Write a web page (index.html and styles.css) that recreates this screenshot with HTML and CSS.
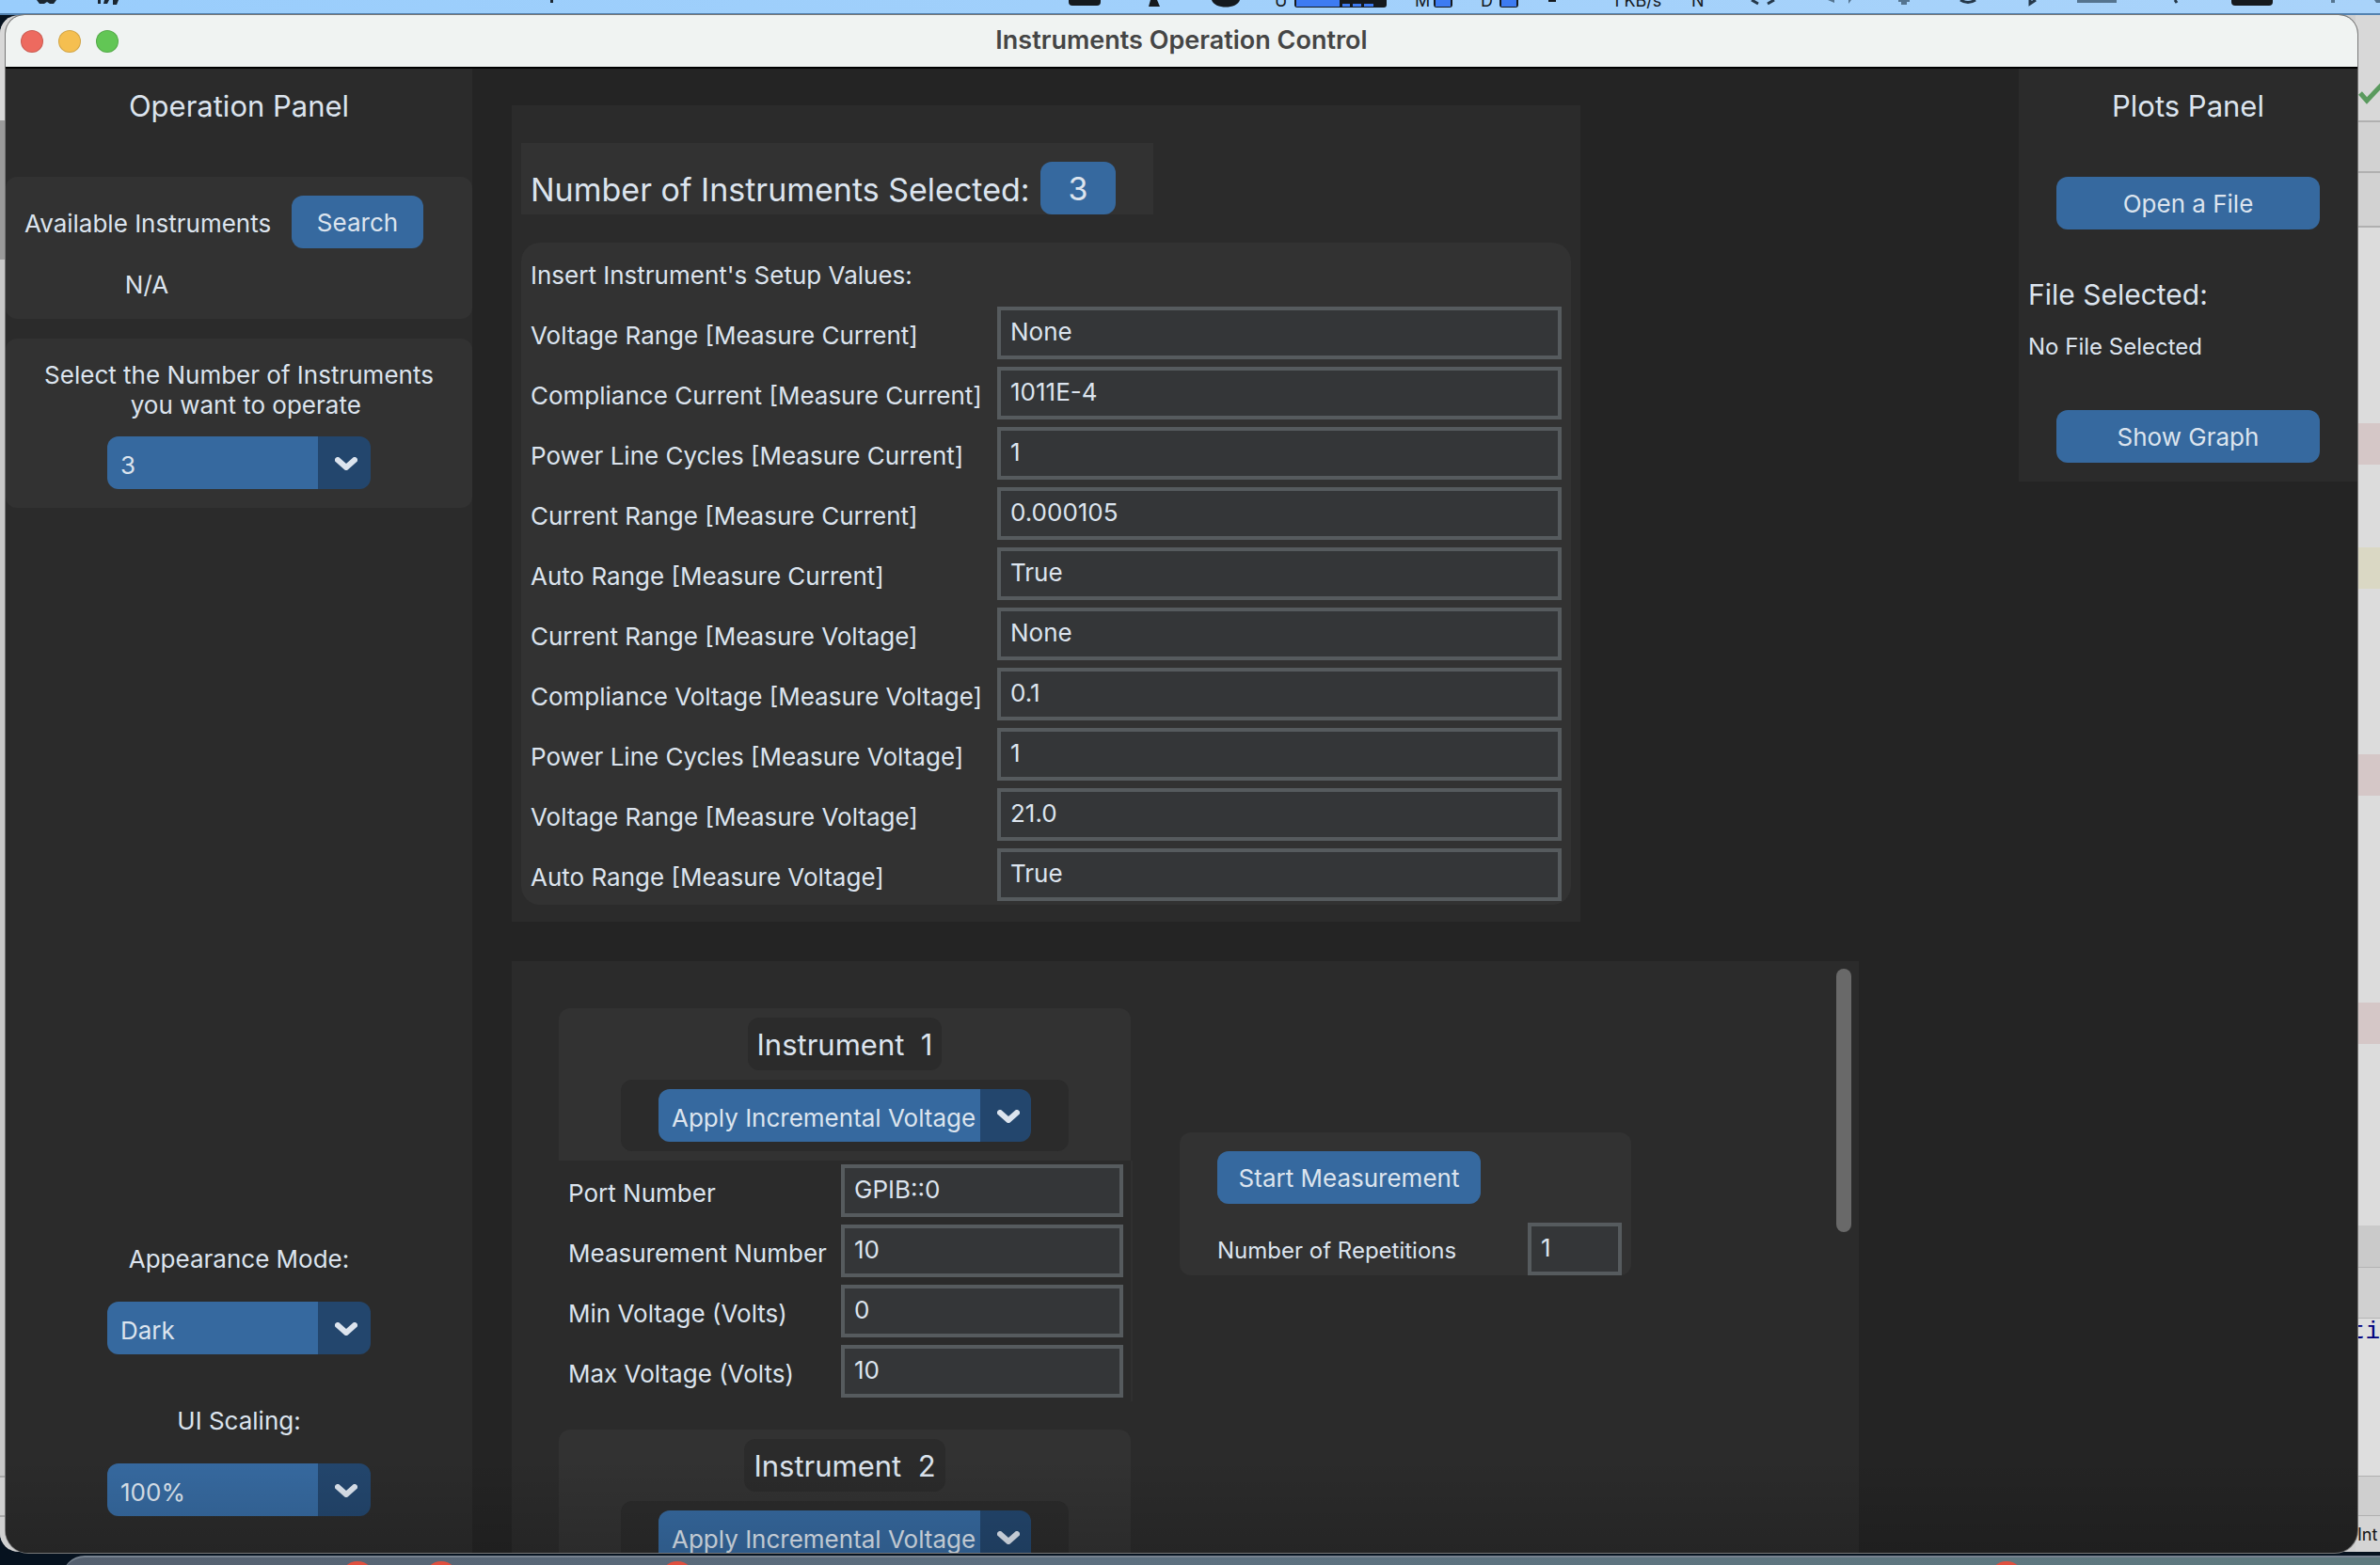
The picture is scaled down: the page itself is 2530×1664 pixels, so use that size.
FILE: index.html
```html
<!DOCTYPE html>
<html lang="en">
<head>
<meta charset="utf-8">
<title>Instruments Operation Control</title>
<link rel="stylesheet" href="styles.css">
</head>
<body>
<svg class="defs" aria-hidden="true"><symbol id="chevron" viewBox="0 0 24 14"><path d="M3 3 L12 11 L21 3" fill="none" stroke="currentColor" stroke-width="6" stroke-linecap="round" stroke-linejoin="round"/></symbol></svg>
<div class="desktop">
  <div class="menubar">
    <svg class="menu-left" width="640" height="14" viewBox="0 0 640 14" aria-hidden="true"><path d="M39 0H60L57 4H53L50 2L47 4H42ZM104 0H107V4H104ZM111 0L116 0L114 4H110ZM120 0H126L124 5H120ZM585 0H588V3H585Z" fill="#1b2630"/></svg>
    <svg class="menu-right" width="1410" height="16" viewBox="1120 0 1410 16" aria-hidden="true">
      <g fill="#15191d"><rect x="1136" y="-8" width="34" height="14" rx="4"/><path d="M1223 0H1230L1233 7H1221Z"/><path d="M1288 0H1318C1315 10 1291 10 1288 0Z"/><rect x="1376" y="-8" width="98" height="16" rx="3"/><rect x="1524" y="-8" width="20" height="16" rx="3"/><rect x="1594" y="-8" width="20" height="16" rx="3"/><rect x="1646" y="0" width="8" height="2"/><rect x="2372" y="-8" width="44" height="14" rx="4"/></g>
      <path d="M1378-2H1424V7H1378ZM1427 4H1435V7H1427ZM1438 4H1447V7H1438ZM1450 4H1460V7H1450ZM1526-2H1542V7H1526ZM1596-2H1612V7H1596Z" fill="#3d7bf2"/>
      <g fill="none" stroke="#25384a" stroke-width="3"><path d="M1862 0L1869 4M1886 0L1879 4M2084 0Q2092 5 2100 0M2158 0V4L2164 0M2312 0L2314 3"/></g>
      <g fill="#55748f"><path d="M1943 0H1950V3ZM1965 0H1968L1965 4ZM2018 0H2030V2H2027V5H2021V2H2018ZM2208 0H2250V3H2208ZM2478 0H2482V3H2478ZM2524 0H2530V3H2526Z"/></g>
      <g class="menu-glyphs"><text x="1355" y="7">U</text><text x="1504" y="7">M</text><text x="1574" y="7">D</text><text x="1714" y="7">1 KB/s</text><text x="1798" y="7">N</text></g>
    </svg>
  </div>

  <div class="editor" aria-hidden="true">
    <div class="gutter"></div>
    <div class="strip">
      <svg class="tick" width="26" height="24" viewBox="0 0 26 24"><path d="M3 11L10 19L26 2" fill="none" stroke="#5a9a5e" stroke-width="5"/></svg>
      <span class="code">ti</span>
      <span class="status">Int</span>
    </div>
  </div>

  <main class="window">
    <header class="titlebar">
      <div class="lights"><button class="light red" aria-label="Close"></button><button class="light amber" aria-label="Minimise"></button><button class="light green" aria-label="Zoom"></button></div>
      <h1>Instruments Operation Control</h1>
    </header>
    <div class="content">
      <aside class="sidebar">
        <h2>Operation Panel</h2>
        <section class="box search-box">
          <span class="caption">Available Instruments</span><button class="btn">Search</button>
          <span class="result">N/A</span>
        </section>
        <section class="box count-box">
          <label for="count">Select the Number of Instruments<br>&nbsp;&nbsp;you want to operate</label>
          <div class="option"><select id="count"><option>3</option></select><svg class="chev"><use href="#chevron"/></svg></div>
        </section>
        <section class="prefs">
          <label for="mode">Appearance Mode:</label>
          <div class="option"><select id="mode"><option>Dark</option></select><svg class="chev"><use href="#chevron"/></svg></div>
          <label for="scale">UI Scaling:</label>
          <div class="option"><select id="scale"><option>100%</option></select><svg class="chev"><use href="#chevron"/></svg></div>
        </section>
      </aside>

      <div class="work">
        <section class="setup">
          <div class="selected"><span>Number of Instruments Selected:</span><button class="btn">3</button></div>
          <form class="values">
            <p>Insert Instrument's Setup Values:</p>
            <label for="v1">Voltage Range [Measure Current]</label><input id="v1" value="None">
            <label for="v2">Compliance Current [Measure Current]</label><input id="v2" value="1011E-4">
            <label for="v3">Power Line Cycles [Measure Current]</label><input id="v3" value="1">
            <label for="v4">Current Range [Measure Current]</label><input id="v4" value="0.000105">
            <label for="v5">Auto Range [Measure Current]</label><input id="v5" value="True">
            <label for="v6">Current Range [Measure Voltage]</label><input id="v6" value="None">
            <label for="v7">Compliance Voltage [Measure Voltage]</label><input id="v7" value="0.1">
            <label for="v8">Power Line Cycles [Measure Voltage]</label><input id="v8" value="1">
            <label for="v9">Voltage Range [Measure Voltage]</label><input id="v9" value="21.0">
            <label for="v10">Auto Range [Measure Voltage]</label><input id="v10" value="True">
          </form>
        </section>

        <section class="runs">
          <div class="instruments">
            <article>
              <div class="head">
                <h3>Instrument&nbsp; 1</h3>
                <div class="action"><div class="option wide"><select aria-label="Instrument 1 action"><option>Apply Incremental Voltage</option></select><svg class="chev"><use href="#chevron"/></svg></div></div>
              </div>
              <form class="params">
                <label for="p1">Port Number</label><input id="p1" value="GPIB::0">
                <label for="p2">Measurement Number</label><input id="p2" value="10">
                <label for="p3">Min Voltage (Volts)</label><input id="p3" value="0">
                <label for="p4">Max Voltage (Volts)</label><input id="p4" value="10">
              </form>
            </article>
            <article>
              <div class="head">
                <h3>Instrument&nbsp; 2</h3>
                <div class="action"><div class="option wide"><select aria-label="Instrument 2 action"><option>Apply Incremental Voltage</option></select><svg class="chev"><use href="#chevron"/></svg></div></div>
              </div>
            </article>
          </div>
          <form class="start">
            <button class="btn" type="button">Start Measurement</button>
            <label for="reps">Number of Repetitions</label><input id="reps" value="1">
          </form>
          <div class="scrollbar"></div>
        </section>
      </div>

      <aside class="plots">
        <h2>Plots Panel</h2>
        <button class="btn">Open a File</button>
        <h4>File Selected:</h4>
        <p>No File Selected</p>
        <button class="btn">Show Graph</button>
      </aside>
    </div>
  </main>

  <div class="dock"><i class="badge b1"></i><i class="badge b2"></i><i class="badge b3"></i><i class="badge b4"></i></div>
</div>
</body>
</html>
```
FILE: styles.css
```css
* { box-sizing: border-box; margin: 0; }
body { font: 400 26px/32px Inter, "Liberation Sans", sans-serif; color: #dce4ee; background: #06121f; }
.defs { position: absolute; width: 0; height: 0; }
.desktop { position: relative; display: flex; flex-direction: column; height: 100vh; overflow: hidden; isolation: isolate; }
button, input, select { font: inherit; color: inherit; }

/* system menu bar */
.menubar { display: flex; justify-content: space-between; flex: none; height: 16px; background: linear-gradient(90deg, #99cdfc, #a9d3fa); border-bottom: 2px solid #5382b0; }
.menubar svg { display: block; }
.menu-glyphs { font-size: 18px; fill: #15191d; }

/* editor window behind */
.editor { position: absolute; inset: 16px 0 14px; z-index: -1; display: flex; justify-content: space-between; border-radius: 20px 0 0 20px; background: #d0d0d0; overflow: hidden; }
.gutter { width: 10px; background: linear-gradient(#d8d8d8 0 112px, #9a9a9a 112px 260px, #c8c8c8 260px 1553px, #a8a8a8 1553px 1555px, #d0d0d0 1555px 1595px, #a8a8a8 1595px 1597px, #d0d0d0 1597px); }
.strip { position: relative; width: 26px; background: linear-gradient(#d8d8d8 0 112px, #b0b0b0 112px 114px, #d2d2d2 114px 166px, #b0b0b0 166px 168px, #d2d2d2 168px 224px, #b0b0b0 224px 226px, #dcdcdc 226px 434px, #d5c7c7 434px 478px, #dcdcdc 478px 566px, #dad8c4 566px 610px, #dcdcdc 610px 786px, #d5c7c7 786px 830px, #dcdcdc 830px 1050px, #d5c7c7 1050px 1094px, #dcdcdc 1094px 1287px, #cacaca 1287px 1331px, #b4b4b4 1331px 1332px, #d0d0d0 1332px 1385px, #b4b4b4 1385px 1386px, #dedede 1386px 1553px, #b0b0b0 1553px 1554px, #cfcfcf 1554px 1595px, #b0b0b0 1595px 1596px, #d4d4d4 1596px); }
.tick { position: absolute; top: 72px; left: 2px; }
.code, .status { position: absolute; right: 0; white-space: nowrap; }
.code { top: 1384px; color: #00007f; font-family: "Liberation Mono", monospace; }
.status { left: 2px; top: 1600px; color: #111; font-size: 18px; }

/* application window */
.window { display: flex; flex-direction: column; flex: 1; min-height: 0; margin: 0 24px 13px 6px; border-radius: 20px 20px 24px 24px; background: #242424; overflow: hidden; box-shadow: 0 0 0 1px #777; position: relative; }
.window::after { content: ""; position: absolute; inset: auto 0 0; height: 100px; background: linear-gradient(transparent, rgba(0, 0, 0, .14)); pointer-events: none; }
.titlebar { display: grid; grid-template-columns: 1fr auto 1fr; align-items: center; flex: none; height: 57px; padding: 0 16px; background: #f0f3f2; border-bottom: 2px solid #000; }
.titlebar h1 { padding-bottom: 2px; font-size: 27px; line-height: 32px; font-weight: 600; color: #454545; }
.lights { display: flex; gap: 16px; }
.light { width: 24px; height: 24px; padding: 0; border: 1px solid rgba(0, 0, 0, .14); border-radius: 50%; }
.red { background: #ed6a5f; }
.amber { background: #f5bf50; }
.green { background: #62c655; }
.content { display: grid; grid-template-columns: 496px 1fr 360px; flex: 1; min-height: 0; }

h2 { font-size: 31px; line-height: 40px; font-weight: 400; text-align: center; }
.btn { height: 56px; padding: 2px 0 0; border: 0; border-radius: 12px; background: #36699f; text-align: center; }
input { width: 100%; height: 56px; padding: 0 10px 3px; border: 4px solid #565b5e; border-radius: 0; background: #343638; outline: 0; }

.option { display: grid; width: 280px; height: 56px; }
.option > * { grid-area: 1 / 1; }
.option select { appearance: none; width: 100%; padding: 5px 0 0 14px; border: 0; border-radius: 12px; background: linear-gradient(270deg, #23466d 56px, #36699f 56px); }
.option.wide { width: 396px; }
.option.wide select { background: linear-gradient(270deg, #23466d 54px, #36699f 54px); }
.chev { width: 24px; height: 14px; margin: 22px 14px 0 0; justify-self: end; pointer-events: none; }
.wide .chev { margin-right: 12px; }

/* left panel */
.sidebar { display: flex; flex-direction: column; background: #2b2b2b; }
.sidebar h2 { padding: 20px 0 55px; }
.box { border-radius: 12px; background: #323232; }
.search-box { display: grid; grid-template-columns: 260px 140px; column-gap: 24px; row-gap: 23px; align-items: center; padding: 20px 20px; margin-bottom: 21px; }
.caption { padding-top: 4px; white-space: nowrap; }
.result { text-align: center; }
.count-box { display: flex; flex-direction: column; align-items: center; gap: 17px; padding: 23px 0 20px; text-align: center; }
.prefs { display: flex; flex-direction: column; align-items: center; margin-top: auto; padding-bottom: 39px; }
.prefs label { padding-bottom: 29px; }
.prefs .option + label { padding-top: 55px; }

/* middle column */
.work { display: flex; flex-direction: column; align-items: flex-start; gap: 42px; padding: 39px 0 0 42px; min-height: 0; }
.setup { flex: none; width: 1136px; padding: 40px 10px 18px; background: #2b2b2b; }
.selected { display: flex; width: 672px; height: 76px; padding: 20px 40px 0 10px; justify-content: space-between; align-items: center; background: #323232; font-size: 34px; white-space: nowrap; }
.selected .btn { flex: none; width: 80px; }
.selected span { padding-top: 3px; }
.values { display: grid; grid-template-columns: 1fr 600px; row-gap: 8px; align-items: center; margin-top: 30px; padding: 19px 10px 4px; border-radius: 20px; background: #323232; }
.values p { grid-column: 1 / -1; padding-bottom: 9px; }
.values label, .params label { padding-top: 6px; white-space: nowrap; }

.runs { display: flex; align-items: flex-start; flex: 1; min-height: 0; width: 1432px; padding: 8px 8px 0 50px; background: #2b2b2b; overflow: hidden; }
.instruments { display: flex; flex-direction: column; gap: 30px; width: 610px; padding-top: 42px; }
.head { display: flex; flex-direction: column; align-items: center; gap: 10px; width: 608px; padding: 10px 0; border-radius: 12px 12px 0 0; background: #323232; }
h3 { height: 56px; padding: 0 10px; border-radius: 12px; background: #2b2b2b; font-size: 31px; line-height: 58px; font-weight: 400; }
.action { display: flex; justify-content: center; width: 476px; padding: 10px 0; border-radius: 12px; background: #2b2b2b; }
.params { display: grid; grid-template-columns: 1fr 300px; row-gap: 8px; align-items: center; padding: 4px 8px 4px 10px; border-right: 2px solid #303030; }
.start { display: grid; grid-template-columns: 1fr 100px; row-gap: 20px; align-items: center; width: 480px; margin: 174px 0 0 50px; padding: 20px 10px 0 40px; border-radius: 12px; background: #323232; }
.start .btn { grid-column: 1 / -1; width: 280px; }
.start label { font-size: 24px; padding-top: 4px; }
.scrollbar { width: 16px; height: 280px; margin-left: auto; border-radius: 8px; background: #696969; }

/* right panel */
.plots { display: flex; flex-direction: column; align-items: flex-start; align-self: start; padding: 20px 10px; background: #2b2b2b; }
.plots h2 { align-self: center; padding-bottom: 55px; }
.plots .btn { align-self: center; width: 280px; }
h4 { padding: 53px 0 24px; font-size: 30px; line-height: 32px; font-weight: 400; }
.plots p { padding-bottom: 51px; font-size: 24px; }

/* dock */
.dock { position: absolute; left: 66px; right: 0; top: calc(100% - 10px); height: 40px; border-top: 2px solid #77828f; border-radius: 24px 0 0 0; background: linear-gradient(90deg, #55606f, #5d6f80 40%, #5f7a7f); overflow: hidden; }
.badge { position: absolute; top: 4px; width: 36px; height: 36px; border-radius: 50%; background: #e0503f; }
.b1 { left: 296px; }
.b2 { left: 385px; }
.b3 { left: 636px; }
.b4 { left: 2049px; }
```
